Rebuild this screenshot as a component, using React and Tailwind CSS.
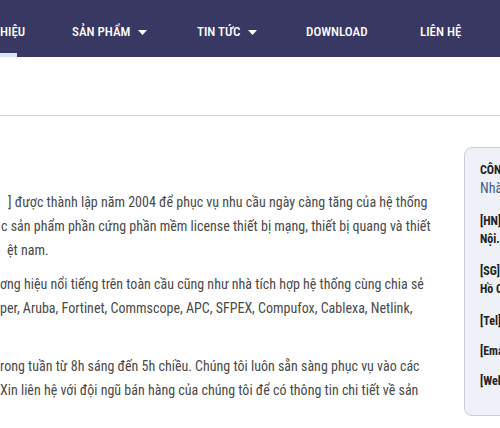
import React from "react";

const font = { fontFamily: "'Roboto Condensed', 'Liberation Sans Narrow', Roboto, sans-serif" };

function Caret() {
  return (
    <svg width="9" height="5" viewBox="0 0 9 5" className="ml-[8px] mt-[1px]">
      <path d="M0 0 L9 0 L4.5 5 Z" fill="#ffffff" />
    </svg>
  );
}

export default function App() {
  const lines1 = [
    { pl: 8, t: "] được thành lập năm 2004 để phục vụ nhu cầu ngày càng tăng của hệ thống" },
    { pl: 1, t: "c sản phẩm phần cứng phần mềm license thiết bị mạng, thiết bị quang và thiết" },
    { pl: 7, t: "ệt nam." },
  ];
  const lines2 = [
    { pl: 0, t: "ơng hiệu nổi tiếng trên toàn cầu cũng như nhà tích hợp hệ thống cùng chia sẻ" },
    { pl: 0, t: "per, Aruba, Fortinet, Commscope, APC, SFPEX, Compufox, Cablexa, Netlink," },
    { pl: 0, t: "\u00a0" },
  ];
  const lines3 = [
    { pl: 0, t: "rong tuần từ 8h sáng đến 5h chiều. Chúng tôi luôn sẵn sàng phục vụ vào các" },
    { pl: 0, t: "Xin liên hệ với đội ngũ bán hàng của chúng tôi để có thông tin chi tiết về sản" },
  ];
  const P = ({ lines }) => (
    <div className="mb-[10px]">
      {lines.map((l, i) => (
        <div key={i} className="whitespace-nowrap h-[24px] leading-[24px] text-[14px] text-[#4a4a4a] [font-stretch:75%]" style={{ paddingLeft: l.pl }}>
          {l.t}
        </div>
      ))}
    </div>
  );
  return (
    <div className="w-[500px] h-[428px] overflow-hidden bg-white relative" style={font}>
      <div className="h-[57px] bg-[#383862] flex items-center text-white text-[13px] font-medium [font-stretch:75%] relative">
        <div className="absolute left-0 bottom-0 w-[17px] h-[4px] bg-[#dbe3f5]" />
        <div className="absolute left-0 top-[22px]">HIỆU</div>
        <div className="absolute left-[72px] top-[22px] flex items-center">SẢN PHẨM<Caret /></div>
        <div className="absolute left-[197px] top-[22px] flex items-center">TIN TỨC<Caret /></div>
        <div className="absolute left-[306px] top-[22px]">DOWNLOAD</div>
        <div className="absolute left-[420px] top-[22px]">LIÊN HỆ</div>
      </div>
      <div className="h-[58px]" />
      <div className="h-px bg-[#d0d0d0]" />
      <div className="flex">
        <div className="w-[464px] shrink-0 overflow-hidden pt-[74px]">
          <P lines={lines1} />
          <P lines={lines2} />
          <P lines={lines3} />
        </div>
        <div className="mt-[31px] w-[140px] shrink-0">
          <div className="h-[269px] w-[140px] bg-[#eef1f7] border border-[#c9ced8] rounded-[8px] pl-[15px] pt-[14px] text-[12px] [font-stretch:75%] text-[#222] whitespace-nowrap overflow-hidden">
            <div className="font-bold leading-[16px]">CÔNG TY TNHH</div>
            <div className="text-[#3e5d8c] text-[14px] leading-[20px]">Nhà phân phối</div>
            <div className="font-bold mt-[14px] leading-[18px]">[HN] Hà Nội</div>
            <div className="font-bold leading-[18px]">Nội.</div>
            <div className="font-bold mt-[14px] leading-[18px]">[SG] TP Hồ</div>
            <div className="font-bold leading-[18px]">Hồ Chí Minh</div>
            <div className="font-bold mt-[14px] leading-[18px]">[Tel]</div>
            <div className="font-bold mt-[12px] leading-[18px]">[Email]</div>
            <div className="font-bold mt-[12px] leading-[18px]">[Web]</div>
          </div>
        </div>
      </div>
    </div>
  );
}
